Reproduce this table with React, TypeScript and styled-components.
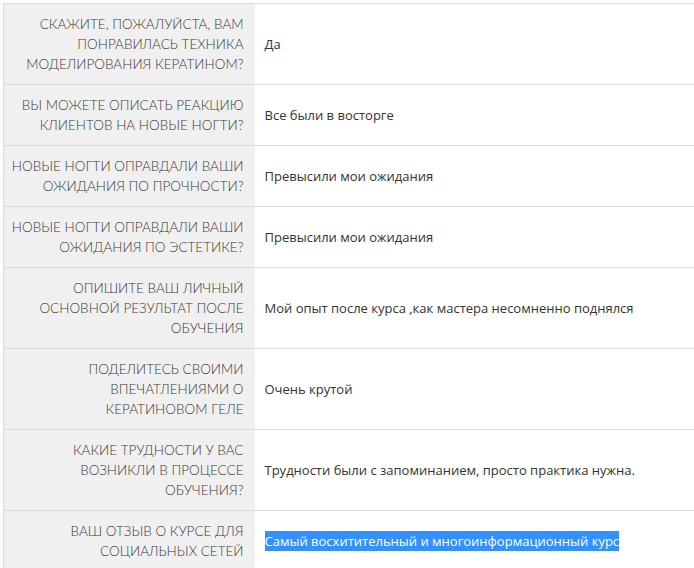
import React from 'react';
import styled, { createGlobalStyle } from 'styled-components';

interface Answer {
  question: string[];
  answer: string;
  selected?: boolean;
}

const answers: Answer[] = [
  {
    question: ['Скажите, пожалуйста, вам', 'понравилась техника', 'моделирования кератином?'],
    answer: 'Да',
  },
  {
    question: ['Вы можете описать реакцию', 'клиентов на новые ногти?'],
    answer: 'Все были в восторге',
  },
  {
    question: ['Новые ногти оправдали ваши', 'ожидания по прочности?'],
    answer: 'Превысили мои ожидания',
  },
  {
    question: ['Новые ногти оправдали ваши', 'ожидания по эстетике?'],
    answer: 'Превысили мои ожидания',
  },
  {
    question: ['Опишите ваш личный', 'основной результат после', 'обучения'],
    answer: 'Мой опыт после курса ,как мастера несомненно поднялся',
  },
  {
    question: ['Поделитесь своими', 'впечатлениями о', 'кератиновом геле'],
    answer: 'Очень крутой',
  },
  {
    question: ['Какие трудности у вас', 'возникли в процессе', 'обучения?'],
    answer: 'Трудности были с запоминанием, просто практика нужна.',
  },
  {
    question: ['Ваш отзыв о курсе для', 'социальных сетей'],
    answer: 'Самый восхитительный и многоинформационный курс',
    selected: true,
  },
];

export default function App(): JSX.Element {
  return (
    <>
      <GlobalStyle />
      <Page>
        <Table>
          <colgroup>
            <QuestionCol />
            <col />
          </colgroup>
          <tbody>
            {answers.map((item, index) => (
              <Row key={index}>
                <Question>
                  {item.question.map((line, i) => (
                    <Line key={i}>{line}</Line>
                  ))}
                </Question>
                <Value>
                  {item.selected ? <Selected>{item.answer}</Selected> : item.answer}
                </Value>
              </Row>
            ))}
          </tbody>
        </Table>
      </Page>
    </>
  );
}

const GlobalStyle = createGlobalStyle`
  html, body {
    margin: 0;
    padding: 0;
    background: #fff;
    overflow: hidden;
  }
`;

const Page = styled.div`
  padding: 3px 0 0 3px;
`;

const Table = styled.table`
  width: 700px;
  table-layout: fixed;
  border-collapse: collapse;
  border-left: 1px solid #dcdcdc;
`;

const QuestionCol = styled.col`
  width: 251px;
`;

const Row = styled.tr`
  border-top: 1px solid #dcdcdc;
  border-bottom: 1px solid #dcdcdc;
`;

const Question = styled.td`
  padding: 10px 11px 10px 0;
  background: #f0f0f0;
  text-align: right;
  vertical-align: middle;
  font-family: Lato, 'Noto Sans', sans-serif;
  font-size: 13.5px;
  font-weight: 300;
  line-height: 20px;
  color: #3a3a3a;
  text-transform: uppercase;
`;

const Line = styled.div`
  white-space: nowrap;
`;

const Value = styled.td`
  padding: 10px 10px;
  vertical-align: middle;
  font-family: 'Open Sans', 'DejaVu Sans', sans-serif;
  font-size: 13px;
  line-height: 20px;
  color: #333;
  white-space: nowrap;
`;

const Selected = styled.span`
  background: #3390ff;
  color: #fff;
  padding: 1px 0;
`;
